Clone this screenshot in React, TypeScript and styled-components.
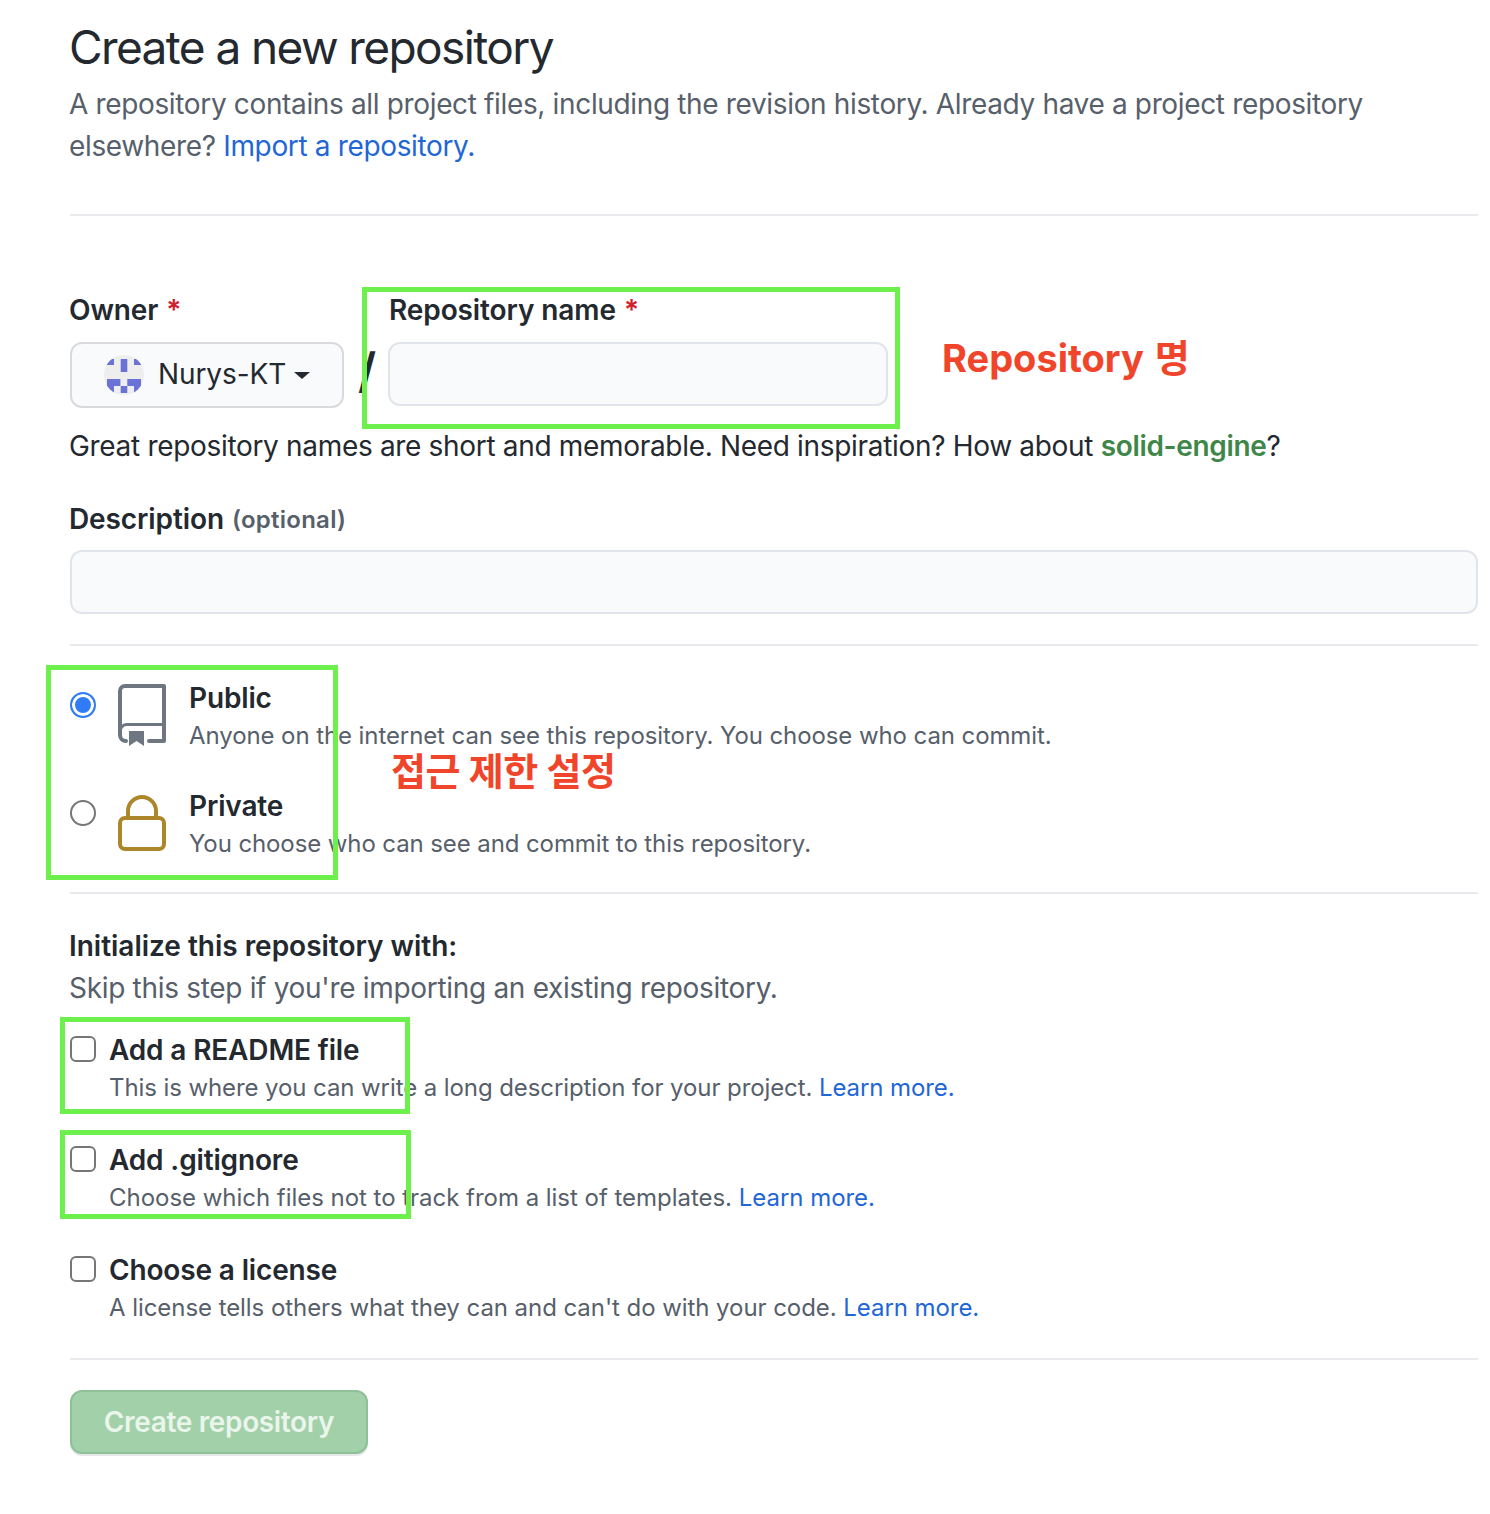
import React from 'react'
import styled, { createGlobalStyle } from 'styled-components'

const Global = createGlobalStyle`
html, body {margin: 0; padding: 0; background: #fff;}
body {font-family: Inter, "Noto Sans CJK KR", sans-serif; color: #24292f;}
`

const Page = styled.div`
position: relative;
width: 1490px;
height: 1514px;
box-sizing: border-box;
padding: 17px 12px 0 70px;
overflow: hidden;
`

const Title = styled.h1`
margin: 0 0 6px -1px;
font-size: 46px;
font-weight: 420;
line-height: 60px;
letter-spacing: -1.6px;
`

const Lead = styled.p<{ $track?: number }>`
margin: 0 0 0 -1px;
font-size: 28px;
line-height: 42px;
letter-spacing: ${p => p.$track ?? -0.35}px;
color: #57606a;
`

const Link = styled.a`
color: #1f66d6;
`

const Divider = styled.hr<{ $top: number }>`
margin: ${p => p.$top}px 0 0;
border: 0;
height: 2px;
background: #e8eaed;
`

const NameRow = styled.div`
display: flex;
margin-top: 74px;
`

const Field = styled.div<{ $width: number }>`
width: ${p => p.$width}px;
`

const Label = styled.label`
display: block;
height: 40px;
margin-left: -1px;
font-size: 28px;
font-weight: 600;
line-height: 40px;
letter-spacing: -0.1px;
`

const RepoLabel = styled(Label)`
margin-left: 1px;
`

const Required = styled.span`
margin-left: 8px;
color: #cf222e;
font-size: 28px;
`

const Optional = styled.span`
margin-left: 8px;
color: #57606a;
font-size: 24px;
letter-spacing: 0.25px;
vertical-align: 1px;
`

const OwnerSelect = styled.div`
display: flex;
align-items: center;
box-sizing: border-box;
width: 274px;
height: 66px;
margin-top: 12px;
padding-left: 32px;
background: #f9fafc;
border: 2px solid #d8dadd;
border-radius: 12px;
font-size: 28px;
letter-spacing: -0.1px;
`

const OwnerName = styled.span`
margin-left: 14px;
padding-bottom: 2px;
`

const Caret = styled.span`
margin-left: 8px;
margin-top: 1px;
border-style: solid;
border-width: 7px 8px 0;
border-color: #24292f transparent transparent;
`

const Slash = styled.span`
width: 44px;
margin-top: 48px;
padding-left: 14px;
box-sizing: border-box;
font-size: 48px;
line-height: 66px;
font-weight: 600;
`

const TextInput = styled.div<{ $width?: number }>`
box-sizing: border-box;
width: ${p => (p.$width ? `${p.$width}px` : '100%')};
height: 64px;
background: #f9fafc;
border: 2px solid #e1e4e8;
border-radius: 12px;
`

const NameInput = styled(TextInput)`
margin-top: 12px;
`

const Hint = styled.p`
margin: 17px 0 0 -1px;
font-size: 28px;
line-height: 42px;
letter-spacing: -0.32px;
`

const Suggestion = styled.strong`
color: #3f8748;
font-weight: 600;
`

const DescLabel = styled(Label)`
margin: 32px 0 11px -1px;
`

const Choices = styled.div`
display: flex;
flex-direction: column;
gap: 34px;
margin-top: 33px;
`

const Choice = styled.div`
display: grid;
grid-template-columns: 26px 22px 48px 23px 1fr;
height: 74px;
`

const Radio = styled.span<{ $on?: boolean }>`
grid-column: 1;
box-sizing: border-box;
width: 26px;
height: 26px;
margin-top: 13px;
border-radius: 50%;
border: 2px solid ${p => (p.$on ? '#2f7cf6' : '#767676')};
background: ${p => (p.$on ? '#2f7cf6' : '#fff')};
box-shadow: ${p => (p.$on ? 'inset 0 0 0 3px #fff' : 'none')};
`

const ChoiceIcon = styled.svg<{ $top: number }>`
grid-column: 3;
display: block;
margin-top: ${p => p.$top}px;
overflow: visible;
`

const ChoiceText = styled.div`
grid-column: 5;
`

const OptionTitle = styled.div`
font-size: 28px;
font-weight: 600;
line-height: 38px;
letter-spacing: -0.15px;
white-space: nowrap;
`

const OptionNote = styled.div<{ $track?: number }>`
padding-top: 1px;
font-size: 24px;
line-height: 36px;
letter-spacing: ${p => p.$track ?? -0.09}px;
color: #57606a;
white-space: nowrap;
`

const InitTitle = styled.div`
margin: 31px 0 0 -1px;
font-size: 28px;
font-weight: 600;
line-height: 42px;
letter-spacing: -0.02px;
`

const Checks = styled.div`
display: flex;
flex-direction: column;
gap: 36px;
margin-top: 22px;
`

const Check = styled.div`
display: flex;
gap: 13px;
height: 74px;
`

const Box = styled.span`
flex: none;
box-sizing: border-box;
width: 26px;
height: 26px;
margin-top: 5px;
border: 2px solid #767676;
border-radius: 6px;
`

const Submit = styled.button`
display: block;
box-sizing: border-box;
width: 298px;
height: 64px;
margin-top: 30px;
padding: 0;
background: #a2d0a8;
border: 2px solid #8fc198;
border-radius: 12px;
box-shadow: 0 2px 0 rgba(27, 31, 36, 0.1);
color: #eaf5ec;
font-family: inherit;
font-size: 28px;
font-weight: 600;
letter-spacing: -0.35px;
`

const Marker = styled.div<{ $x: number; $y: number; $w: number; $h: number }>`
position: absolute;
left: ${p => p.$x}px;
top: ${p => p.$y}px;
width: ${p => p.$w}px;
height: ${p => p.$h}px;
box-sizing: border-box;
border: 5px solid #6ef04c;
pointer-events: none;
`

const Note = styled.div<{ $x: number; $y: number }>`
position: absolute;
left: ${p => p.$x}px;
top: ${p => p.$y}px;
color: #f0452a;
font-size: 38px;
font-weight: 700;
line-height: 46px;
white-space: nowrap;
`

const KoreanNote = styled(Note)`
letter-spacing: -0.4px;
`

const LatinNote = styled(Note)`
word-spacing: 2px;
`

function Avatar() {
  return (
    <svg width="40" height="40" viewBox="0 0 40 40">
      <defs>
        <clipPath id="avatar-clip">
          <circle cx="20" cy="20" r="20" />
        </clipPath>
      </defs>
      <circle cx="20" cy="20" r="20" fill="#eeeeee" />
      <g fill="#6a72d8" clipPath="url(#avatar-clip)">
        <rect x="16.7" y="4" width="6.6" height="13" />
        <rect x="3" y="4" width="7" height="6" />
        <rect x="30" y="4" width="7" height="6" />
        <rect x="3" y="24" width="13.4" height="7" />
        <rect x="23.3" y="24" width="13.7" height="7" />
        <rect x="3" y="31" width="7" height="7" />
        <rect x="16.7" y="31" width="6.6" height="7" />
        <rect x="30" y="31" width="7" height="7" />
      </g>
    </svg>
  )
}

function RepoIcon() {
  return (
    <ChoiceIcon $top={5} width="48" height="62" viewBox="0 0 48 62" fill="none">
      <path d="M8 57a6 6 0 0 1-6-6V7a5 5 0 0 1 5-5h39v55H31" stroke="#6e7781" strokeWidth="4" strokeLinejoin="round" strokeLinecap="round" />
      <path d="M2 47a7 7 0 0 1 7-6.5h37" stroke="#6e7781" strokeWidth="3" />
      <path d="M11 47h15v15l-7.5-5-7.5 5z" fill="#6e7781" />
    </ChoiceIcon>
  )
}

function LockIcon() {
  return (
    <ChoiceIcon $top={8} width="48" height="56" viewBox="0 0 48 56" fill="none">
      <path d="M10 22V16a14 14 0 0 1 28 0v6" stroke="#ac872a" strokeWidth="4" />
      <rect x="2" y="23" width="44" height="31" rx="5" stroke="#ac872a" strokeWidth="4" />
    </ChoiceIcon>
  )
}

export default function App() {
  return (
    <>
      <Global />
      <Page>
        <Title>Create a new repository</Title>
        <Lead>
          A repository contains all project files, including the revision history. Already have a project repository
          elsewhere? <Link>Import a repository.</Link>
        </Lead>
        <Divider $top={47} />

        <NameRow>
          <Field $width={274}>
            <Label>Owner<Required>*</Required></Label>
            <OwnerSelect>
              <Avatar />
              <OwnerName>Nurys-KT</OwnerName>
              <Caret />
            </OwnerSelect>
          </Field>
          <Slash>/</Slash>
          <Field $width={500}>
            <RepoLabel>Repository name<Required>*</Required></RepoLabel>
            <NameInput />
          </Field>
        </NameRow>
        <Hint>
          Great repository names are short and memorable. Need inspiration? How about <Suggestion>solid-engine</Suggestion>?
        </Hint>

        <DescLabel>Description<Optional>(optional)</Optional></DescLabel>
        <TextInput />
        <Divider $top={30} />

        <Choices>
          <Choice>
            <Radio $on />
            <RepoIcon />
            <ChoiceText>
              <OptionTitle>Public</OptionTitle>
              <OptionNote>Anyone on the internet can see this repository. You choose who can commit.</OptionNote>
            </ChoiceText>
          </Choice>
          <Choice>
            <Radio />
            <LockIcon />
            <ChoiceText>
              <OptionTitle>Private</OptionTitle>
              <OptionNote $track={-0.1}>You choose who can see and commit to this repository.</OptionNote>
            </ChoiceText>
          </Choice>
        </Choices>
        <Divider $top={31} />

        <InitTitle>Initialize this repository with:</InitTitle>
        <Lead $track={-0.31}>Skip this step if you're importing an existing repository.</Lead>
        <Checks>
          <Check>
            <Box />
            <div>
              <OptionTitle>Add a README file</OptionTitle>
              <OptionNote>This is where you can write a long description for your project. <Link>Learn more.</Link></OptionNote>
            </div>
          </Check>
          <Check>
            <Box />
            <div>
              <OptionTitle>Add .gitignore</OptionTitle>
              <OptionNote $track={-0.03}>Choose which files not to track from a list of templates. <Link>Learn more.</Link></OptionNote>
            </div>
          </Check>
          <Check>
            <Box />
            <div>
              <OptionTitle>Choose a license</OptionTitle>
              <OptionNote $track={-0.06}>A license tells others what they can and can't do with your code. <Link>Learn more.</Link></OptionNote>
            </div>
          </Check>
        </Checks>
        <Divider $top={33} />
        <Submit>Create repository</Submit>

        <Marker $x={362} $y={287} $w={538} $h={142} />
        <Marker $x={46} $y={665} $w={292} $h={215} />
        <Marker $x={60} $y={1017} $w={350} $h={97} />
        <Marker $x={60} $y={1130} $w={351} $h={89} />
        <LatinNote $x={942} $y={335}>Repository 명</LatinNote>
        <KoreanNote $x={391} $y={748}>접근 제한 설정</KoreanNote>
      </Page>
    </>
  )
}
